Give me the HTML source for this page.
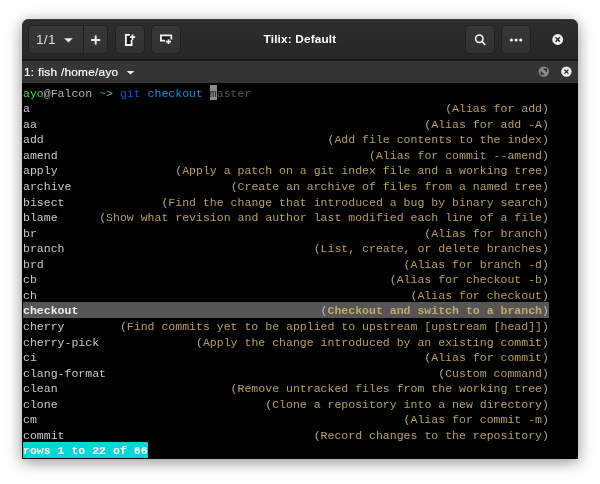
<!DOCTYPE html>
<html><head><meta charset="utf-8"><title>Tilix: Default</title>
<style>
html,body{margin:0;padding:0;}
body{width:600px;height:484px;background:#fff;overflow:hidden;position:relative;font-family:"Liberation Sans","DejaVu Sans",sans-serif;}
#win{position:absolute;left:22px;top:19px;width:556px;height:440.3px;background:#000;border-radius:7px 7px 0 0;box-shadow:0 3px 15px 0 rgba(0,0,0,.44);overflow:hidden;}
#hdr{position:absolute;left:0;top:0;right:0;height:40px;background:linear-gradient(#2e2e2e,#272727);border-bottom:2px solid #161616;box-shadow:inset 0 1px rgba(255,255,255,.07);}
.btn{position:absolute;top:6.4px;height:28.4px;box-sizing:border-box;background:linear-gradient(#373737,#323232);border:1px solid #202020;border-radius:4.5px;color:#eee;box-shadow:inset 0 1px rgba(255,255,255,.04);}
#pg,#title,#tl,.r{will-change:transform;}
#pg{position:absolute;left:14.2px;top:0;height:41px;line-height:41.5px;color:#ddd;font-size:13.6px;letter-spacing:0.3px;}
#tl{position:absolute;left:1.6px;top:0;color:#fff;-webkit-text-stroke:0.2px #fff}
#title{position:absolute;left:0;right:0;top:0;height:41px;line-height:41px;text-align:center;color:#fff;font-weight:bold;font-size:11.8px;letter-spacing:0.16px;}
#tab{position:absolute;left:0;right:0;top:42px;height:22px;background:#353535;color:#eee;font-size:11.8px;letter-spacing:0.27px;line-height:22px;}
#term{position:absolute;left:1.1px;top:65.6px;right:0;bottom:0;font-family:"Liberation Mono","DejaVu Sans Mono",monospace;font-size:11.54px;color:#b4b4b4;}
.r{position:absolute;left:0;height:15.56px;line-height:17.9px;white-space:pre;width:526px;}
.n{color:#c8c8c8}
.d{color:#b69e66}
.p{color:#aaa69c}
.sel{background:#555;font-weight:bold}
.sel .n{color:#eee}
.sel .p{font-weight:normal;color:#c0c0c0}
.sel .d{color:#c6a96a}
</style></head><body>
<div id="win">
<div id="hdr">
<div class="btn" style="left:6.3px;width:79.6px;border-radius:4px"></div>
<div class="btn" style="left:61.1px;width:24.8px;border-radius:0 4px 4px 0;border-left:1px solid #1e1e1e"></div>
<div class="btn" style="left:92.5px;width:30px"></div>
<div class="btn" style="left:129.0px;width:29.8px"></div>
<div class="btn" style="left:442.5px;width:30.4px"></div>
<div class="btn" style="left:478.7px;width:30.4px"></div>
<div id="pg">1/1</div>
<div id="title">Tilix: Default</div>
</div>
<div id="tab"><span id="tl">1: fish /home/ayo</span></div>
<div id="term">
<div style="position:absolute;left:186.87px;top:0.6px;width:6.92px;height:14.8px;background:#8a8a8a"></div>
<div class="r" style="top:0"><span style="color:#3ade3a">ayo</span>@Falcon <span style="color:#34b062">~</span><span style="color:#9a9a9a">&gt;</span> <span style="color:#0a58c8">git</span> <span style="color:#1590d8">checkout</span> <span style="color:#222">m</span><span style="color:#555">aster</span></div>
<div class="r" style="top:15.56px"><span class="n">a</span>                                                            <span class="p">(</span><span class="d">Alias for add</span><span class="p">)</span></div>
<div class="r" style="top:31.12px"><span class="n">aa</span>                                                        <span class="p">(</span><span class="d">Alias for add -A</span><span class="p">)</span></div>
<div class="r" style="top:46.68px"><span class="n">add</span>                                         <span class="p">(</span><span class="d">Add file contents to the index</span><span class="p">)</span></div>
<div class="r" style="top:62.24px"><span class="n">amend</span>                                             <span class="p">(</span><span class="d">Alias for commit --amend</span><span class="p">)</span></div>
<div class="r" style="top:77.80px"><span class="n">apply</span>                 <span class="p">(</span><span class="d">Apply a patch on a git index file and a working tree</span><span class="p">)</span></div>
<div class="r" style="top:93.36px"><span class="n">archive</span>                       <span class="p">(</span><span class="d">Create an archive of files from a named tree</span><span class="p">)</span></div>
<div class="r" style="top:108.92px"><span class="n">bisect</span>              <span class="p">(</span><span class="d">Find the change that introduced a bug by binary search</span><span class="p">)</span></div>
<div class="r" style="top:124.48px"><span class="n">blame</span>      <span class="p">(</span><span class="d">Show what revision and author last modified each line of a file</span><span class="p">)</span></div>
<div class="r" style="top:140.04px"><span class="n">br</span>                                                        <span class="p">(</span><span class="d">Alias for branch</span><span class="p">)</span></div>
<div class="r" style="top:155.60px"><span class="n">branch</span>                                    <span class="p">(</span><span class="d">List, create, or delete branches</span><span class="p">)</span></div>
<div class="r" style="top:171.16px"><span class="n">brd</span>                                                    <span class="p">(</span><span class="d">Alias for branch -d</span><span class="p">)</span></div>
<div class="r" style="top:186.72px"><span class="n">cb</span>                                                   <span class="p">(</span><span class="d">Alias for checkout -b</span><span class="p">)</span></div>
<div class="r" style="top:202.28px"><span class="n">ch</span>                                                      <span class="p">(</span><span class="d">Alias for checkout</span><span class="p">)</span></div>
<div class="r sel" style="top:217.84px"><span class="n">checkout</span>                                   <span class="p">(</span><span class="d">Checkout and switch to a branch</span><span class="p">)</span></div>
<div class="r" style="top:233.40px"><span class="n">cherry</span>        <span class="p">(</span><span class="d">Find commits yet to be applied to upstream [upstream [head]]</span><span class="p">)</span></div>
<div class="r" style="top:248.96px"><span class="n">cherry-pick</span>              <span class="p">(</span><span class="d">Apply the change introduced by an existing commit</span><span class="p">)</span></div>
<div class="r" style="top:264.52px"><span class="n">ci</span>                                                        <span class="p">(</span><span class="d">Alias for commit</span><span class="p">)</span></div>
<div class="r" style="top:280.08px"><span class="n">clang-format</span>                                                <span class="p">(</span><span class="d">Custom command</span><span class="p">)</span></div>
<div class="r" style="top:295.64px"><span class="n">clean</span>                         <span class="p">(</span><span class="d">Remove untracked files from the working tree</span><span class="p">)</span></div>
<div class="r" style="top:311.20px"><span class="n">clone</span>                              <span class="p">(</span><span class="d">Clone a repository into a new directory</span><span class="p">)</span></div>
<div class="r" style="top:326.76px"><span class="n">cm</span>                                                     <span class="p">(</span><span class="d">Alias for commit -m</span><span class="p">)</span></div>
<div class="r" style="top:342.32px"><span class="n">commit</span>                                    <span class="p">(</span><span class="d">Record changes to the repository</span><span class="p">)</span></div>
<div class="r" style="top:357.88px;width:auto"><span style="background:#00d7d7;color:#fff;font-weight:bold;display:inline-block;height:15.56px;vertical-align:top">rows 1 to 22 of 66</span></div>
</div>
</div>
<svg id="ov" width="600" height="484" viewBox="0 0 600 484" style="position:absolute;left:0;top:0">
<!-- dropdown triangle -->
<path d="M64.2 38.2h8.6l-4.3 4.2z" fill="#eee"/>
<!-- plus -->
<path d="M91.1 40h9.2M95.7 35.4v9.2" stroke="#f2f2f2" stroke-width="1.9" fill="none"/>
<!-- add right -->
<rect x="126" y="34.8" width="5.6" height="10.2" fill="#1e1e1e"/>
<path d="M130 34.8h-4.1v10.2h5.7v-5" stroke="#f2f2f2" stroke-width="1.8" fill="none"/>
<path d="M130 37.2h5.1M132.5 34.6v5.3" stroke="#f2f2f2" stroke-width="1.7" fill="none"/>
<!-- add down -->
<rect x="161" y="35.4" width="10.3" height="5.3" fill="#1e1e1e"/>
<path d="M165.2 40.7h-4.3v-5.3h10.4v4.2" stroke="#f2f2f2" stroke-width="1.8" fill="none"/>
<path d="M166 41.6h5.1M168.5 39.2v4.7" stroke="#f2f2f2" stroke-width="1.7" fill="none"/>
<!-- search -->
<circle cx="479.3" cy="38.7" r="3.7" stroke="#f2f2f2" stroke-width="1.6" fill="none"/>
<path d="M481.9 41.4l2.9 3" stroke="#f2f2f2" stroke-width="1.7" stroke-linecap="round"/>
<!-- dots -->
<circle cx="511.4" cy="40" r="1.55" fill="#f4f4f4"/><circle cx="516.05" cy="40" r="1.55" fill="#f4f4f4"/><circle cx="520.7" cy="40" r="1.55" fill="#f4f4f4"/>
<!-- close -->
<circle cx="557.7" cy="39.5" r="5.4" fill="#f0f0f0"/>
<path d="M555.5 37.3l4.4 4.4M559.9 37.3l-4.4 4.4" stroke="#222" stroke-width="1.4"/>
<!-- tab triangle -->
<path d="M126.6 71h7.8l-3.9 3.6z" fill="#eee"/>
<!-- tab maximize -->
<circle cx="543.8" cy="71.6" r="5.2" fill="#8a8a8a"/>
<path d="M542.9 68.5h4.1v4.1zM540.6 70.7l4.1 4.1h-4.1z" fill="#303030"/>
<!-- tab close -->
<circle cx="566.4" cy="71.6" r="5.2" fill="#f0f0f0"/>
<path d="M564.4 69.6l4 4M568.4 69.6l-4 4" stroke="#222" stroke-width="1.3"/>
</svg>
</body></html>
